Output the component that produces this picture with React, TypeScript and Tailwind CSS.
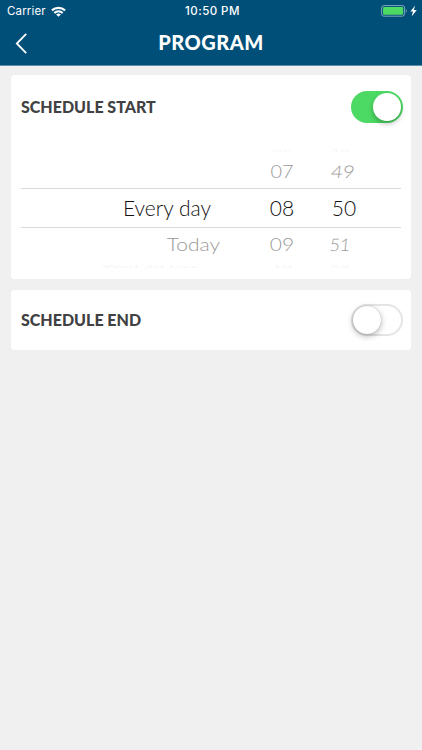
import { useState } from 'react'

interface PickerRow {
  day: string
  hour: string
  minute: string
  row: string
  dayClass: string
  hourClass: string
  minuteClass: string
}

// Wheel rows shrink vertically and fade out away from the selected one
const rows: PickerRow[] = [
  {
    day: '',
    hour: '06',
    minute: '48',
    row: 'h-[15px] items-end overflow-hidden text-[#f3f3f3]',
    dayClass: '',
    hourClass: 'origin-bottom scale-x-85 scale-y-20',
    minuteClass: '-translate-x-1 origin-bottom scale-x-85 scale-y-20',
  },
  {
    day: '',
    hour: '07',
    minute: '49',
    row: 'h-[35px] items-center text-[#999999]',
    dayClass: '',
    hourClass: 'scale-x-95 scale-y-83',
    minuteClass: '-translate-x-px scale-x-95 scale-y-83 -skew-x-6',
  },
  {
    day: 'Every day',
    hour: '08',
    minute: '50',
    row: 'h-10 items-center border-y border-[#dadada] text-[#111111]',
    dayClass: 'w-[190px]',
    hourClass: '',
    minuteClass: '',
  },
  {
    day: 'Today',
    hour: '09',
    minute: '51',
    row: 'h-8 items-center text-[#999999]',
    dayClass: 'w-[199px] origin-right scale-y-83',
    hourClass: 'scale-y-83',
    minuteClass: '-translate-x-1 scale-x-85 scale-y-83 -skew-x-6',
  },
  {
    day: 'Wed 30 Dec',
    hour: '10',
    minute: '52',
    row: 'h-[9px] items-end overflow-hidden text-[#f0f0f0]',
    dayClass: 'w-[179px] origin-bottom-right scale-x-85 scale-y-20',
    hourClass: 'origin-bottom scale-x-85 scale-y-20',
    minuteClass: '-translate-x-1 origin-bottom scale-x-85 scale-y-20',
  },
]

function StatusBar() {
  return (
    <div className="grid h-[22px] grid-cols-3 items-center pt-px pr-1 pl-[7px] font-['Inter',sans-serif] text-[11.5px] leading-none text-white">
      <div className="flex items-center gap-[5px]">
        <span className="tracking-[0.15px]">Carrier</span>
        <svg width="15" height="11" viewBox="0 0 15 11" fill="none" stroke="currentColor" strokeWidth="2.1">
          <path d="M0.9 4.4a10 10 0 0 1 13.2 0" />
          <path d="M3.3 7a6.3 6.3 0 0 1 8.4 0" />
          <path d="M7.5 10.8L5.1 8.6a3.6 3.6 0 0 1 4.8 0z" fill="currentColor" stroke="none" />
        </svg>
      </div>
      <span className="text-center font-medium tracking-[0.45px]">10:50 PM</span>
      <div className="flex items-center justify-end">
        <svg width="37" height="13" viewBox="0 0 37 13">
          <rect x="0.6" y="0.6" width="23" height="10.6" rx="2.4" fill="none" stroke="#8eb0c4" strokeWidth="0.9" />
          <rect x="2" y="2" width="20.2" height="7.8" rx="1.2" fill="#4cd964" />
          <path d="M24.8 4.2c1.3.5 1.3 2.9 0 3.4z" fill="#8eb0c4" />
          <path d="M34.2 0.6L29.4 6.4h2.6l-1.4 5L35.8 5h-3z" fill="#fff" />
        </svg>
      </div>
    </div>
  )
}

function Toggle({ on, onChange, label }: { on: boolean; onChange: () => void; label: string }) {
  return (
    <button
      role="switch"
      aria-checked={on}
      aria-label={label}
      onClick={onChange}
      className={`flex h-8 w-[52px] items-center rounded-full border-2 transition-colors ${
        on ? 'justify-end border-[#4cd964] bg-[#4cd964]' : 'justify-start border-[#e5e5e5] bg-white'
      }`}
    >
      <span
        className={`size-7 rounded-full bg-white ${
          on ? 'shadow-[0_3px_5px_rgba(0,0,0,0.25)]' : 'shadow-[0_2px_6px_rgba(0,0,0,0.3),0_0_1px_rgba(0,0,0,0.3)]'
        }`}
      />
    </button>
  )
}

function TimePicker() {
  return (
    <div className="mr-[10px] ml-[10px] text-[21px] leading-[24px] font-light">
      {rows.map((r) => (
        <div key={r.hour} className={`flex ${r.row}`}>
          <div className="w-[248px] shrink-0">
            <div className={`text-right whitespace-nowrap ${r.dayClass}`}>{r.day}</div>
          </div>
          <div className={`w-[26px] text-center ${r.hourClass}`}>{r.hour}</div>
          <div className={`ml-9 w-[26px] text-center ${r.minuteClass}`}>{r.minute}</div>
        </div>
      ))}
    </div>
  )
}

export default function App() {
  const [startOn, setStartOn] = useState(true)
  const [endOn, setEndOn] = useState(false)

  return (
    <div className="min-h-screen bg-[#f0f0f0] font-['Lato',sans-serif]">
      <header className="h-[66px] border-b border-[#5f8eaa] bg-[#004f78] text-white">
        <StatusBar />
        <div className="grid h-[42px] grid-cols-[40px_1fr_40px] items-center">
          <button aria-label="Back" className="pl-[15px]">
            <svg width="13" height="21" viewBox="0 0 13 21" fill="none" stroke="currentColor" strokeWidth="1.8">
              <path d="M11.2 0.8L1.8 10.5l9.4 9.7" />
            </svg>
          </button>
          <h1 className="-mt-0.5 text-center text-[20px] leading-none font-black tracking-[0.5px]">PROGRAM</h1>
        </div>
      </header>

      <main className="flex flex-col gap-[11px] pt-[9px] pr-[11px] pl-[11px]">
        <section className="h-[204px] rounded-[4px] bg-white">
          <div className="flex h-[63px] items-center justify-between pr-2 pl-[10px]">
            <h2 className="text-[16px] leading-none font-black text-[#414143]">SCHEDULE START</h2>
            <Toggle on={startOn} onChange={() => setStartOn(!startOn)} label="Schedule start" />
          </div>
          <TimePicker />
        </section>

        <section className="flex h-[60px] items-center justify-between rounded-[4px] bg-white pr-2 pl-[10px]">
          <h2 className="text-[16px] leading-none font-black text-[#414143]">SCHEDULE END</h2>
          <Toggle on={endOn} onChange={() => setEndOn(!endOn)} label="Schedule end" />
        </section>
      </main>
    </div>
  )
}
